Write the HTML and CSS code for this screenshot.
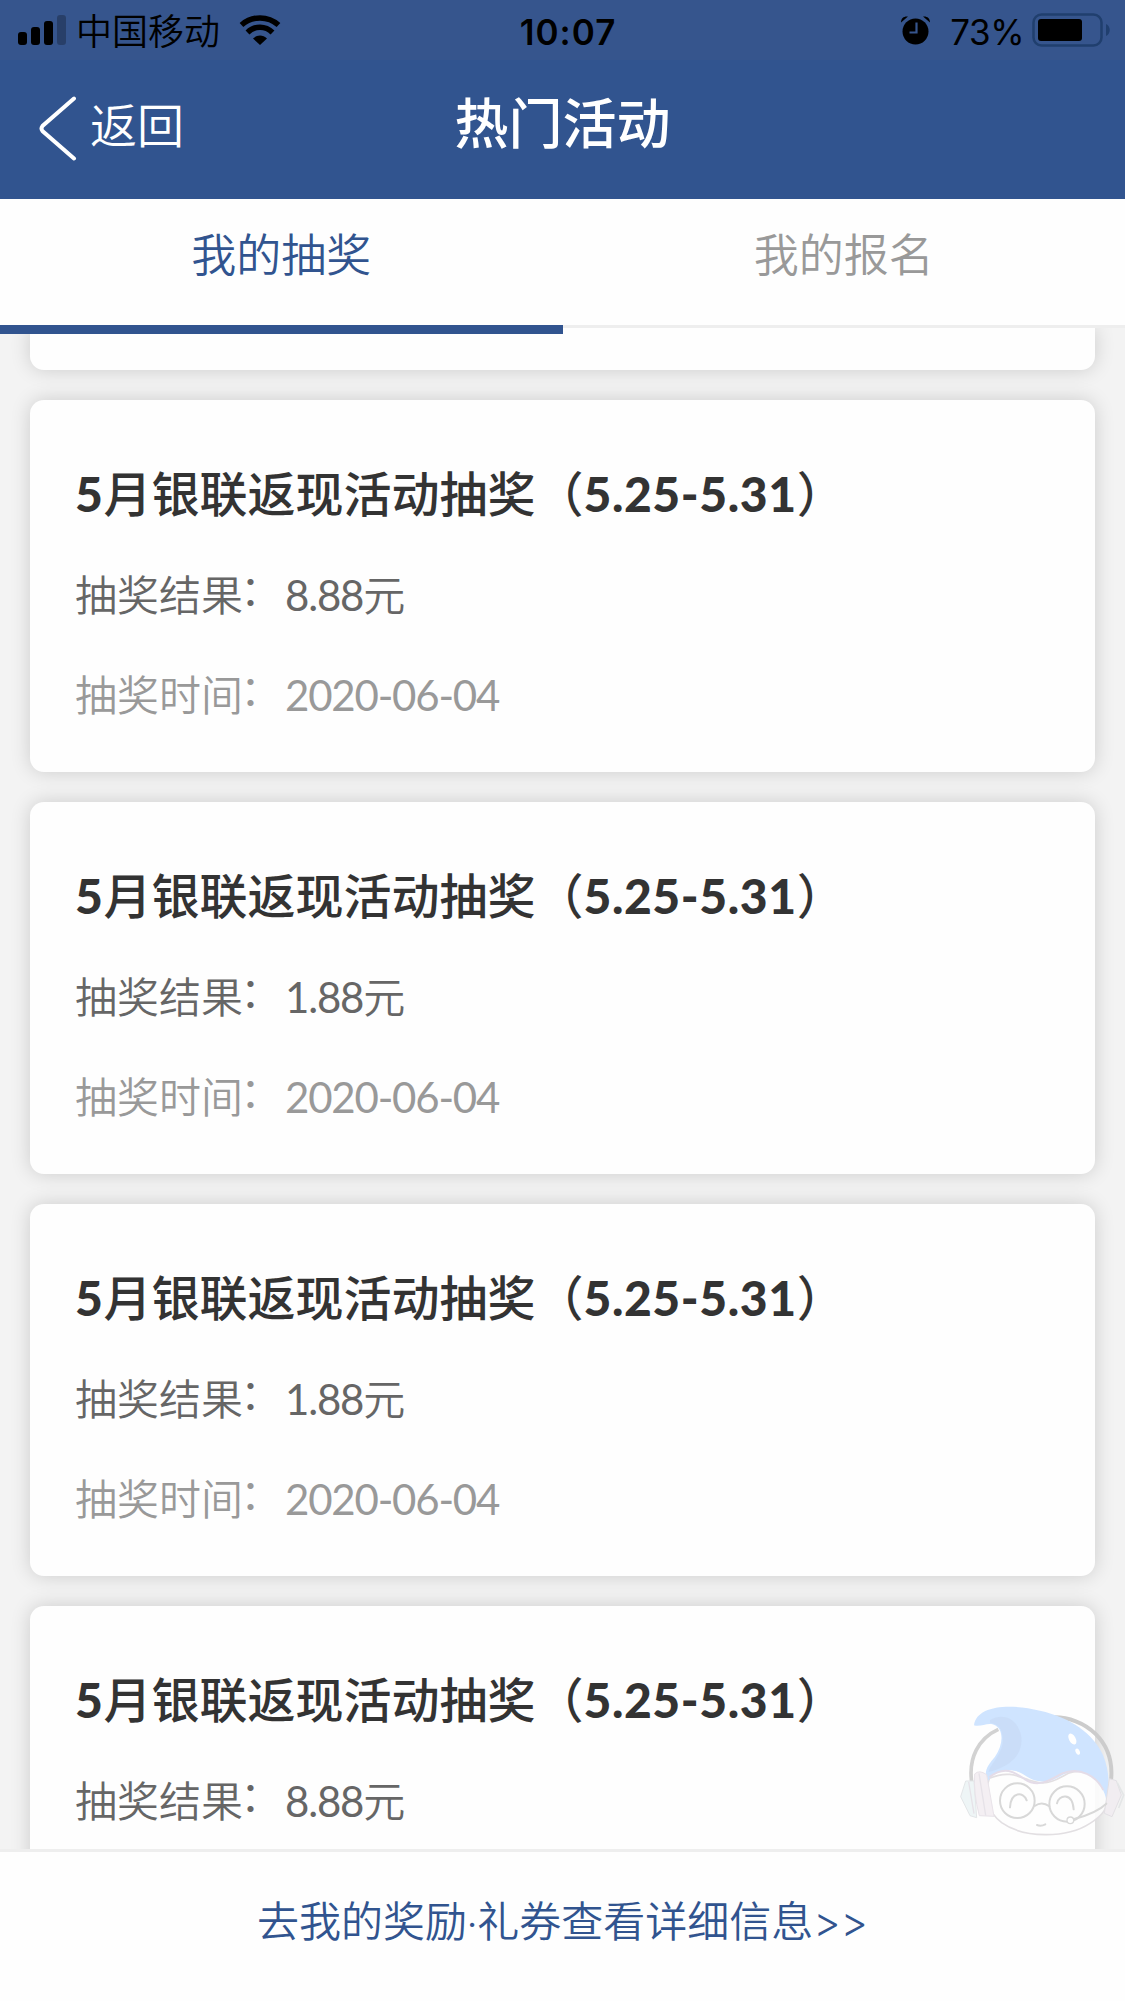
FILE: index.html
```
<!DOCTYPE html>
<html lang="zh-CN">
<head>
    <meta charset="UTF-8">
    <meta name="viewport" content="width=device-width, initial-scale=1.0">
    <title>热门活动</title>
    <link rel="stylesheet" href="styles.css">
</head>
<body>
    <div class="page">
        <div class="status-bar">
            <div class="status-left">
                <svg class="signal" width="49" height="32" viewBox="0 0 49 32">
                    <rect x="0" y="18" width="9" height="13" rx="3"/>
                    <rect x="13" y="13" width="9" height="18" rx="3"/>
                    <rect x="26" y="7" width="9" height="24" rx="3"/>
                    <rect x="39" y="1" width="9" height="30" rx="3" opacity="0.25"/>
                </svg>
                <span class="carrier">中国移动</span>
                <svg class="wifi" width="42" height="31" viewBox="0 0 42 31">
                    <path d="M2.500 10 C13 .5 29 .5 39.500 10" fill="none" stroke="#000" stroke-width="5.500"/>
                    <path d="M8.500 17.500 C15.500 10.500 26.500 10.500 33.500 17.500" fill="none" stroke="#000" stroke-width="5.500"/>
                    <path d="M14 23.500 C18 19.500 24 19.500 28 23.500 L21 30 Z"/>
                </svg>
            </div>
            <span class="clock">10:07</span>
            <div class="status-right">
                <svg class="alarm" width="29" height="29" viewBox="0 0 29 29">
                    <circle cx="14.500" cy="15.500" r="13"/>
                    <path d="M0 6.500 C0 2 3 0 7 .5 Z M29 6.500 C29 2 26 0 22 .5 Z"/>
                    <path d="M15.500 6.500 V16.500 H8.500" fill="none" stroke="#36558d" stroke-width="2.200"/>
                </svg>
                <span class="percent">73%</span>
                <svg class="battery" width="79" height="34" viewBox="0 0 79 34">
                    <rect x="1.500" y="1.500" width="68" height="31" rx="8" fill="none" stroke="#203f6e" stroke-width="2.500"/>
                    <rect x="6" y="6" width="44" height="22" rx="3"/>
                    <path d="M74 11 C79 13 79 21 74 23 Z" fill="#203f6e"/>
                </svg>
            </div>
        </div>

        <header class="nav">
            <a class="back">
                <svg width="38" height="65" viewBox="0 0 38 65">
                    <path d="M35 2.500 L3.500 30 Q1.500 32.500 3.500 35 L35 62.500" fill="none" stroke="#fff" stroke-width="4" stroke-linecap="round"/>
                </svg>
                <span>返回</span>
            </a>
            <h1>热门活动</h1>
        </header>

        <nav class="tabs">
            <a class="tab active">我的抽奖</a>
            <a class="tab">我的报名</a>
        </nav>

        <main class="list">
            <div class="card card-first"></div>
            <div class="card">
                <h2><b>5</b>月银联返现活动抽奖（<b>5.25-5.31</b>）</h2>
                <p class="result">抽奖结果<i>：</i><span>8.88</span>元</p>
                <p class="time">抽奖时间<i>：</i><span>2020-06-04</span></p>
            </div>
            <div class="card">
                <h2><b>5</b>月银联返现活动抽奖（<b>5.25-5.31</b>）</h2>
                <p class="result">抽奖结果<i>：</i><span>1.88</span>元</p>
                <p class="time">抽奖时间<i>：</i><span>2020-06-04</span></p>
            </div>
            <div class="card">
                <h2><b>5</b>月银联返现活动抽奖（<b>5.25-5.31</b>）</h2>
                <p class="result">抽奖结果<i>：</i><span>1.88</span>元</p>
                <p class="time">抽奖时间<i>：</i><span>2020-06-04</span></p>
            </div>
            <div class="card card-last">
                <h2><b>5</b>月银联返现活动抽奖（<b>5.25-5.31</b>）</h2>
                <p class="result">抽奖结果<i>：</i><span>8.88</span>元</p>
            </div>

            <!-- customer service mascot -->
            <svg class="mascot" width="195" height="169" viewBox="0 0 585 507">
                <path d="M125 305 C115 235 145 175 205 148" fill="none" stroke="#d2d2d2" stroke-width="11"/>
                <path d="M370 112 C460 110 560 180 542 310" fill="none" stroke="#cccccc" stroke-width="12"/>
                <path d="M178 295 C158 345 172 395 215 428 C280 475 410 476 480 430 C520 405 535 385 532 340 C520 280 450 265 415 280 C380 300 350 315 320 306 C275 300 250 265 178 295 Z" fill="#fefefe" fill-opacity=".85" stroke="#e2dfe2" stroke-width="5"/>
                <path d="M132 136 C140 75 240 70 330 92 C420 112 490 160 519 225 C538 270 540 320 529 362 C522 315 485 275 435 273 C400 275 380 305 340 305 C290 304 285 270 235 271 C205 272 187 283 174 303 C158 275 174 255 195 230 C220 195 222 150 195 136 C175 124 153 143 132 136 Z" fill="#cfe4ff"/>
                <path d="M180 120 C225 95 265 120 274 170 C280 225 240 260 176 276 C178 255 220 220 218 180 C218 145 205 132 180 128 Z" fill="#c8dbf5" opacity=".75"/>
                <path d="M178 292 C225 255 255 278 285 298 C325 325 365 298 395 281 C450 258 500 290 520 330" fill="none" stroke="#e4dce8" stroke-width="6"/>
                <ellipse cx="427" cy="177" rx="10" ry="18" fill="#fff" transform="rotate(-28 427 177)"/>
                <ellipse cx="443" cy="215" rx="6" ry="10" fill="#fff" transform="rotate(-25 443 215)"/>
                <path d="M92 350 L107 303 L132 303 L140 413 L120 407 Z" fill="#eef5f6" stroke="#e3e6e8" stroke-width="3"/>
                <path d="M134 282 Q148 268 170 284 L192 409 L148 407 Q130 340 134 282 Z" fill="#f4eff3" stroke="#e8e3e9" stroke-width="3"/>
                <path d="M147 280 L167 406 M116 306 L132 401" fill="none" stroke="#e6e2e8" stroke-width="4"/>
                <path d="M538 296 L559 302 L574 345 L546 410 L523 400 Z" fill="#f1edf1" stroke="#e2e0e4" stroke-width="3"/>
                <path d="M562 309 L581 345 L566 384" fill="none" stroke="#e4e6e7" stroke-width="5"/>
                <g fill="none" stroke="#d8d8d8" stroke-width="6" stroke-linecap="round">
                    <circle cx="262" cy="362" r="52"/>
                    <circle cx="411" cy="372" r="53"/>
                    <path d="M314 378 Q336 362 358 379"/>
                    <path d="M240 382 C243 335 280 334 290 361 M381 370 C385 345 427 335 431 388"/>
                    <path d="M321 435 Q333 440 346 433"/>
                    <path d="M529 371 Q500 399 430 418"/>
                </g>
                <circle cx="421" cy="421" r="10" fill="#fff" stroke="#d8d8d8" stroke-width="4"/>
            </svg>
        </main>

        <footer class="footer">
            <a>去我的奖励·礼券查看详细信息<span class="arrows">&gt;&gt;</span></a>
        </footer>
    </div>
</body>
</html>
```
FILE: styles.css
```
* {
    margin: 0;
    padding: 0;
    box-sizing: border-box;
}

:root {
    --blue: #31548f;
    --status-bg: #36558d;
    --bg-color: #f3f3f3;
    --card-bg: #fefefe;
    --line: #eeeeee;
    --title: #333;
    --text: #666;
    --muted: #999;
}

body {
    background-color: var(--bg-color);
    font-family: "Noto Sans CJK SC", sans-serif;
    font-weight: 350;
}

.page {
    height: 2001px;
    display: flex;
    flex-direction: column;
    overflow: hidden;
}

.status-bar {
    height: 60px;
    flex: none;
    background-color: var(--status-bg);
    color: #000;
    display: grid;
    grid-template-columns: 1fr auto 1fr;
    align-items: center;
    padding: 0 14px 0 18px;
}

.status-left,
.status-right {
    display: flex;
    align-items: center;
}

.status-right {
    justify-content: flex-end;
}

.signal {
    margin-right: 9px;
}

.carrier {
    font-size: 36px;
    line-height: 56px;
    margin-top: -2px;
}

.wifi {
    margin-left: 19px;
}

.clock {
    font-family: Inter, sans-serif;
    font-size: 35px;
    font-weight: 600;
    letter-spacing: 1px;
    padding: 3px 0 0 7px;
}

.percent {
    font-family: Inter, sans-serif;
    font-size: 35px;
    font-weight: 400;
    letter-spacing: -0.5px;
    margin: 3px 8px 0 20px;
}

.nav {
    height: 139px;
    flex: none;
    background-color: var(--blue);
    color: #fff;
    display: grid;
    grid-template-columns: 1fr auto 1fr;
    padding: 0 39px;
}

.back {
    display: flex;
    align-items: center;
    align-self: start;
    padding-top: 36px;
    gap: 13px;
    font-size: 47px;
    line-height: 60px;
}

.back span {
    margin-top: -12px;
}

.nav h1 {
    font-size: 54px;
    font-weight: 500;
    line-height: 70px;
    padding-top: 26px;
}

.tabs {
    height: 129px;
    flex: none;
    display: flex;
    background-color: var(--card-bg);
    border-bottom: 3px solid var(--line);
    position: relative;
    z-index: 1;
}

.tab {
    flex: 1;
    height: 126px;
    text-align: center;
    font-size: 45px;
    line-height: 108px;
    color: var(--muted);
}

.tab.active {
    height: 135px;
    color: var(--blue);
    border-bottom: 9px solid var(--blue);
}

.list {
    flex: 1;
    min-height: 0;
    padding: 0 30px;
    display: flex;
    flex-direction: column;
    gap: 30px;
    overflow: hidden;
    position: relative;
}

.card {
    flex: none;
    height: 372px;
    padding: 61px 45px 0;
    background-color: var(--card-bg);
    border-radius: 14px;
    box-shadow: 0 0 20px rgba(0, 0, 0, 0.16);
}

.card-first {
    height: 42px;
    padding: 0;
    border-radius: 0 0 14px 14px;
}

.card-last {
    height: 300px;
}

.card h2 {
    font-size: 48px;
    font-weight: 500;
    line-height: 60px;
    color: var(--title);
}

.card h2 b {
    font-family: Lato, sans-serif;
    font-weight: 900;
    letter-spacing: 0.6px;
}

.card p {
    font-size: 42px;
    line-height: 60px;
}

.card .result {
    margin-top: 39px;
    color: var(--text);
}

.card .time {
    margin-top: 38px;
    color: var(--muted);
}

.card p i {
    font-style: normal;
    line-height: 1;
    vertical-align: 5px;
    margin: 0 3px 0 -3px;
}

.card p span {
    font-family: Lato, sans-serif;
    font-weight: 400;
    letter-spacing: -1.2px;
}

.mascot {
    position: absolute;
    right: 0;
    bottom: 0;
}

.footer {
    height: 152px;
    flex: none;
    background-color: var(--card-bg);
    border-top: 3px solid var(--line);
    color: var(--blue);
    font-family: Lato, "Noto Sans CJK SC", sans-serif;
    font-size: 42px;
    line-height: 138px;
    text-align: center;
}

.arrows {
    font-family: Inter, sans-serif;
    font-weight: 300;
}
```
